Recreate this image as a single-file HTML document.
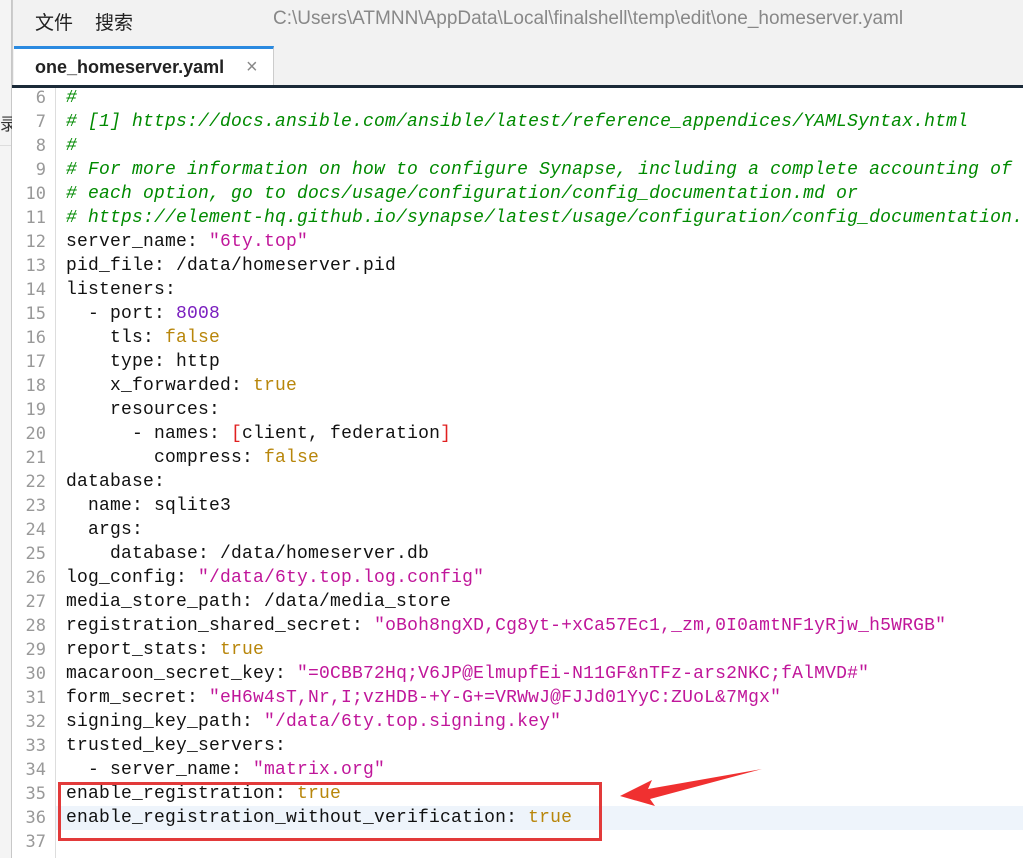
<html><head><style>
body{margin:0;width:1023px;height:858px;overflow:hidden;background:#f2f2f2;font-family:"Liberation Sans","Noto Sans CJK SC",sans-serif;position:relative}
.side{position:absolute;left:0;top:0;width:11px;height:858px;background:#f4f4f4;border-right:1px solid #c8c8c8}
.menu{position:absolute;top:8px;font-size:19px;color:#222}
.title{position:absolute;left:273px;top:8px;font-size:19px;color:#888}
.tab{position:absolute;left:14px;top:46px;width:260px;height:40px;background:#fff;border-top:3px solid #2b8ae0;box-sizing:border-box;border-right:1px solid #ccc}
.tab span{position:absolute;left:21px;top:8px;font-size:18px;font-weight:bold;color:#222}
.tab i{position:absolute;left:232px;top:7px;font-style:normal;font-size:20px;color:#888}
.bar{position:absolute;left:12px;top:85px;width:1011px;height:3px;background:#1b2a38}
.ed{position:absolute;left:12px;top:88px;width:1011px;height:770px;background:#fff}
.gut{position:absolute;left:12px;top:88px;width:43px;height:770px;border-right:1px solid #ddd;background:#fff}
.ln{position:absolute;left:12px;width:34px;text-align:right;font:17px "DejaVu Sans Mono","Liberation Mono",monospace;color:#999;height:24px;line-height:24px}
.cl{position:absolute;left:66px;font:18px "Liberation Mono",monospace;letter-spacing:0.2px;white-space:pre;height:24px;line-height:24px;color:#111}
.c{color:#008a00;font-style:italic}.s{color:#c0169a}.b{color:#b8860b}.n{color:#7a1fbf}.r{color:#e02020}
</style></head><body>
<div class="side"></div>
<div style="position:absolute;left:0;top:110px;font-size:17px;color:#333">录</div>
<div style="position:absolute;left:0;top:145px;width:11px;border-top:1px solid #ddd"></div>
<div class="menu" style="left:35px">文件</div><div class="menu" style="left:95px">搜索</div>
<div class="title">C:\Users\ATMNN\AppData\Local\finalshell\temp\edit\one_homeserver.yaml</div>
<div style="position:absolute;left:12px;top:0;width:1px;height:86px;background:#ccc"></div>
<div class="tab"><span>one_homeserver.yaml</span><i>×</i></div>
<div class="bar"></div>
<div class="ed"></div>
<div style="position:absolute;left:56px;top:806px;width:967px;height:24px;background:#eef4fb"></div>
<div class="gut"></div>
<div id="code"></div>
<div style="position:absolute;left:58px;top:782px;width:538px;height:53px;border:3px solid #e23a3a"></div>
<svg style="position:absolute;left:0;top:0" width="1023" height="858"><polygon points="620,796 652,780 648,789 762,769 650,799 655,806" fill="#f03030"/></svg>
<script>
var L=[
'<span class="c">#</span>',
'<span class="c"># [1] https://docs.ansible.com/ansible/latest/reference_appendices/YAMLSyntax.html</span>',
'<span class="c">#</span>',
'<span class="c"># For more information on how to configure Synapse, including a complete accounting of</span>',
'<span class="c"># each option, go to docs/usage/configuration/config_documentation.md or</span>',
'<span class="c"># https://element-hq.github.io/synapse/latest/usage/configuration/config_documentation.html</span>',
'server_name: <span class="s">"6ty.top"</span>',
'pid_file: /data/homeserver.pid',
'listeners:',
'  - port: <span class="n">8008</span>',
'    tls: <span class="b">false</span>',
'    type: http',
'    x_forwarded: <span class="b">true</span>',
'    resources:',
'      - names: <span class="r">[</span>client, federation<span class="r">]</span>',
'        compress: <span class="b">false</span>',
'database:',
'  name: sqlite3',
'  args:',
'    database: /data/homeserver.db',
'log_config: <span class="s">"/data/6ty.top.log.config"</span>',
'media_store_path: /data/media_store',
'registration_shared_secret: <span class="s">"oBoh8ngXD,Cg8yt-+xCa57Ec1,_zm,0I0amtNF1yRjw_h5WRGB"</span>',
'report_stats: <span class="b">true</span>',
'macaroon_secret_key: <span class="s">"=0CBB72Hq;V6JP@ElmupfEi-N11GF&amp;nTFz-ars2NKC;fAlMVD#"</span>',
'form_secret: <span class="s">"eH6w4sT,Nr,I;vzHDB-+Y-G+=VRWwJ@FJJd01YyC:ZUoL&amp;7Mgx"</span>',
'signing_key_path: <span class="s">"/data/6ty.top.signing.key"</span>',
'trusted_key_servers:',
'  - server_name: <span class="s">"matrix.org"</span>',
'enable_registration: <span class="b">true</span>',
'enable_registration_without_verification: <span class="b">true</span>',
''];
var h='';for(var i=0;i<L.length;i++){var t=86+i*24;h+='<div class="ln" style="top:'+t+'px">'+(i+6)+'</div><div class="cl" style="top:'+t+'px">'+L[i]+'</div>';}
document.getElementById('code').innerHTML=h;
</script>
</body></html>
